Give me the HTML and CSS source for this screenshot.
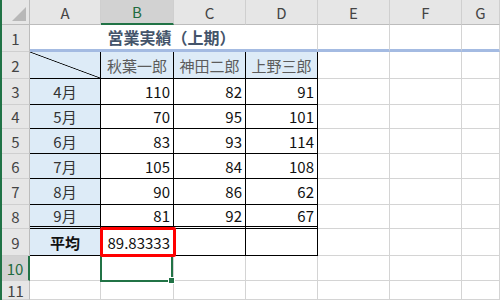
FILE: index.html
```html
<!DOCTYPE HTML>
<html>
	<head>
		<meta charset="utf-8">
		<link rel="stylesheet" href="styles.css">
	</head>
	<body>
		<div class="sheet">
			<!-- column headers -->
			<div class="corner"><span class="tri"></span></div>
			<div class="ch">A</div>
			<div class="ch sel">B</div>
			<div class="ch">C</div>
			<div class="ch">D</div>
			<div class="ch">E</div>
			<div class="ch">F</div>
			<div class="ch">G</div>

			<!-- 1 -->
			<div class="rh">1</div>
			<div class="c title">営業実績（上期）</div>
			<div class="c"></div>
			<div class="c"></div>
			<div class="c"></div>

			<!-- 2 -->
			<div class="rh">2</div>
			<div class="c t hd diag"></div>
			<div class="c t hd name">秋葉一郎</div>
			<div class="c t hd name">神田二郎</div>
			<div class="c t hd name">上野三郎</div>
			<div class="c"></div>
			<div class="c"></div>
			<div class="c"></div>

			<!-- 3 -->
			<div class="rh">3</div>
			<div class="c t hd mon">4月</div>
			<div class="c t num">110</div>
			<div class="c t num">82</div>
			<div class="c t num">91</div>
			<div class="c"></div>
			<div class="c"></div>
			<div class="c"></div>

			<!-- 4 -->
			<div class="rh">4</div>
			<div class="c t hd mon">5月</div>
			<div class="c t num">70</div>
			<div class="c t num">95</div>
			<div class="c t num">101</div>
			<div class="c"></div>
			<div class="c"></div>
			<div class="c"></div>

			<!-- 5 -->
			<div class="rh">5</div>
			<div class="c t hd mon">6月</div>
			<div class="c t num">83</div>
			<div class="c t num">93</div>
			<div class="c t num">114</div>
			<div class="c"></div>
			<div class="c"></div>
			<div class="c"></div>

			<!-- 6 -->
			<div class="rh">6</div>
			<div class="c t hd mon">7月</div>
			<div class="c t num">105</div>
			<div class="c t num">84</div>
			<div class="c t num">108</div>
			<div class="c"></div>
			<div class="c"></div>
			<div class="c"></div>

			<!-- 7 -->
			<div class="rh">7</div>
			<div class="c t hd mon">8月</div>
			<div class="c t num">90</div>
			<div class="c t num">86</div>
			<div class="c t num">62</div>
			<div class="c"></div>
			<div class="c"></div>
			<div class="c"></div>

			<!-- 8 -->
			<div class="rh">8</div>
			<div class="c t hd mon dbl">9月</div>
			<div class="c t num dbl">81</div>
			<div class="c t num dbl">92</div>
			<div class="c t num dbl">67</div>
			<div class="c"></div>
			<div class="c"></div>
			<div class="c"></div>

			<!-- 9 -->
			<div class="rh">9</div>
			<div class="c t hd mon avg">平均</div>
			<div class="c t num mark">89.83333</div>
			<div class="c t"></div>
			<div class="c t"></div>
			<div class="c"></div>
			<div class="c"></div>
			<div class="c"></div>

			<!-- 10 -->
			<div class="rh sel">10</div>
			<div class="c"></div>
			<div class="c active"></div>
			<div class="c"></div>
			<div class="c"></div>
			<div class="c"></div>
			<div class="c"></div>
			<div class="c"></div>

			<!-- 11 -->
			<div class="rh">11</div>
			<div class="c"></div>
			<div class="c"></div>
			<div class="c"></div>
			<div class="c"></div>
			<div class="c"></div>
			<div class="c"></div>
			<div class="c"></div>
		</div>
	</body>
</html>
```

FILE: styles.css
```css
html, body {
	margin: 0;
	padding: 0;
	background: #fff;
}

body {
	width: 500px;
	height: 300px;
	overflow: hidden;
	font-family: "Noto Sans CJK JP", "Noto Sans", sans-serif;
	font-size: 15px;
	color: #111;
}

.sheet {
	display: grid;
	grid-template-columns: 28px 71px 73px 72px 72px 72px 72px 1fr;
	grid-template-rows: 25px 27px 27px 26px 24px 25px 25px 26px 24px 27px 25px 1fr;
	height: 300px;
	border-left: 2px solid #217346;
}

.sheet > div {
	box-sizing: border-box;
	min-width: 0;
	white-space: nowrap;
}

/* headers */
.corner {
	position: relative;
	background: #e6e6e6;
	border-right: 1px solid #bcbcbc;
	border-bottom: 1px solid #bcbcbc;
}

.tri {
	position: absolute;
	right: 3px;
	bottom: 3px;
	width: 0;
	height: 0;
	border-left: 14px solid transparent;
	border-bottom: 14px solid #b8b8b8;
}

.ch {
	background: #e6e6e6;
	color: #444;
	border-right: 1px solid #cfcfcf;
	border-bottom: 1px solid #bcbcbc;
	display: flex;
	align-items: center;
	justify-content: center;
	font-size: 15px;
	line-height: 1;
}

.rh {
	background: #e6e6e6;
	color: #444;
	border-right: 1px solid #bcbcbc;
	border-bottom: 1px solid #cfcfcf;
	display: flex;
	align-items: center;
	justify-content: center;
	font-size: 15px;
	line-height: 1;
}

.ch.sel {
	background: #d2d2d2;
	color: #1f6b40;
	border-bottom: 2px solid #217346;
}

.rh.sel {
	background: #d2d2d2;
	color: #1f6b40;
	border-right: 2px solid #217346;
}

/* cells */
.c {
	border-right: 1px solid #d4d4d4;
	border-bottom: 1px solid #d4d4d4;
	display: flex;
	align-items: center;
	line-height: 1;
	padding: 0 3px;
}

.title {
	grid-column: span 4;
	justify-content: center;
	font-size: 16px;
	font-weight: bold;
	color: #44546a;
	border-right: 1px solid #d4d4d4;
	border-bottom: 3px solid #a4bbe2;
	padding-left: 0;
	padding-right: 4px;
}

.title ~ .c:nth-child(-n+13) {
	border-bottom: 3px solid #a4bbe2;
}

.t {
	border-right: 1px solid #000;
	border-bottom: 1px solid #000;
}

.hd {
	background: #ddebf7;
}

.name {
	justify-content: center;
	color: #5c5c5c;
}

.mon {
	justify-content: center;
	color: #333;
}

.avg {
	font-weight: bold;
	color: #111;
}

.num {
	justify-content: flex-end;
	color: #111;
}

.dbl {
	border-bottom: 3px double #000;
}

.diag {
	background:
		linear-gradient(to top right, transparent calc(50% - 0.8px), #000 50%, transparent calc(50% + 0.8px)),
		#ddebf7;
}

/* red mark drawn over B9 */
.mark {
	position: relative;
}

.mark::after {
	content: "";
	position: absolute;
	top: -2px;
	left: -1px;
	right: -3px;
	bottom: -2px;
	border: 3px solid #ff0000;
	border-radius: 2px;
	z-index: 3;
}

/* active cell B10 */
.active {
	position: relative;
}

.active::after {
	content: "";
	position: absolute;
	top: -1px;
	left: -1px;
	right: 0;
	bottom: -2px;
	border: 2px solid #217346;
	z-index: 2;
}

.active::before {
	content: "";
	position: absolute;
	right: -2px;
	bottom: -4px;
	width: 5px;
	height: 5px;
	background: #217346;
	border: 1px solid #fff;
	z-index: 4;
}
```
